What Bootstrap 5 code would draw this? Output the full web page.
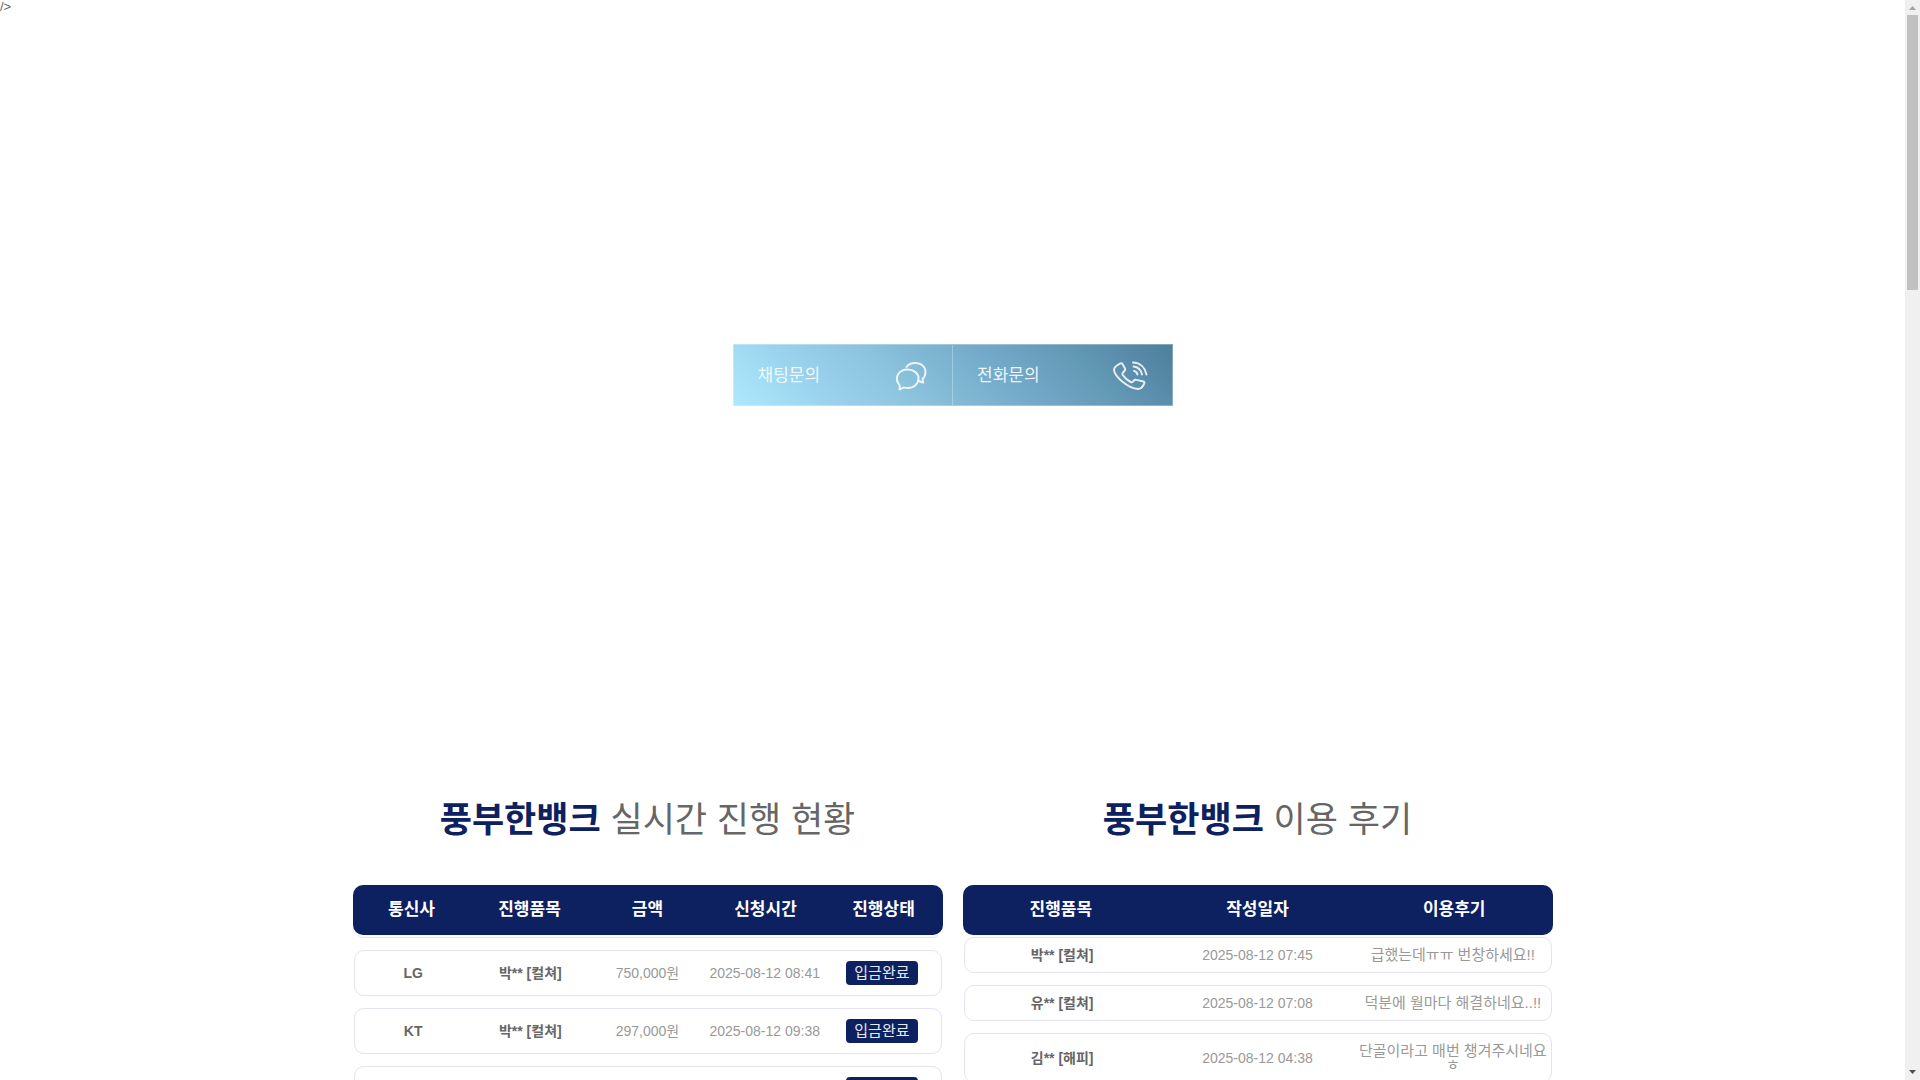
<!DOCTYPE html>
<html lang="ko">
<head>
<meta charset="utf-8">
<meta name="viewport" content="width=device-width, initial-scale=1">
<title>풍부한뱅크</title>
<link href="https://cdn.jsdelivr.net/npm/bootstrap@5.3.0/dist/css/bootstrap.min.css" rel="stylesheet">
<style>
  :root { --navy: #0d2060; --line: #e4e2f3; }
  body { font-family: "Liberation Sans", "Noto Sans CJK KR", sans-serif; font-size: 14px; line-height: 14px; color: #666; background: #fff; }
  .stray { font-size: 13px; height: 14px; }
  .hero { height: 720px; padding-top: 330px; }
  .contact { width: 440px; height: 62px; border: 1px solid rgba(255,255,255,.3);
    background: linear-gradient(45deg, #aee8fe 0%, #a1dcf3 12%, #99d0ec 22%, #8bc2dc 38%, #7bb3d0 52%, #70a5c5 65%, #6299b4 78%, #5a8cab 88%, #4c7f99 100%) border-box; }
  .contact a { color: rgba(255,255,255,.88); font-size: 17px; padding: 2px 24px 0; }
  .contact a + a { border-left: 1px solid rgba(255,255,255,.3); }
  .contact svg { width: 36px; height: 36px; fill: none; stroke: #fff; stroke-width: 2; stroke-linecap: round; stroke-linejoin: round; opacity: .85; }
  .boards { max-width: 1200px; gap: 20px; padding-top: 66px; }
  .board { flex: 1 1 0; min-width: 0; }
  .board h2 { font-size: 35px; line-height: 40px; font-weight: 400; margin-bottom: 45px; text-align: center; }
  .board h2 strong { color: var(--navy); }
  .board thead { background: var(--navy); border-radius: 10px; }
  .board th, .board td { flex: 1 1 0; min-width: 0; padding: 0; text-align: center; }
  .board thead th { color: #fff; font-size: 17px; line-height: 50px; font-weight: 700; }
  .board tbody { overflow: hidden; padding: 0 1px; }
  .board tbody tr { border: 1px solid var(--line); border-radius: 10px; margin-bottom: 12px; }
  .board tbody td { color: #999; }
  .progress-list tbody tr { height: 46px; }
  .progress-list tbody tr.passed { margin-top: -43px; }
  .state { display: inline-block; background: var(--navy); color: #e7e9f0; font-size: 15px; line-height: 24px; width: 72px; border-radius: 4px; }
  .review-list tbody { padding-top: 2px; }
  .review-list tbody tr { padding: 10px 0; }
  .review-list td:last-child { font-size: 15px; }
  .bar { flex: 0 0 15px; background: #f0f0f0; padding: 6px 2px; }
  .bar svg { width: 7px; height: 4px; margin: 0 auto 5px; display: block; }
  .bar svg.down { margin: auto auto 0; }
  .thumb { height: 275px; background: #c1c1c1; }
</style>
<script src="https://cdn.jsdelivr.net/npm/bootstrap@5.3.0/dist/js/bootstrap.bundle.min.js"></script>
</head>
<body>
<div class="d-flex vh-100 overflow-hidden">
  <main class="flex-grow-1 overflow-hidden">
    <div class="stray">/&gt;</div>
    <section class="hero">
      <nav class="contact d-flex mx-auto" aria-label="문의">
        <a href="#chat" class="d-flex flex-fill align-items-center justify-content-between text-decoration-none">채팅문의
          <svg viewBox="0 0 36 36" aria-hidden="true"><path d="M7.500 31.500C8 29.500 8 28 7 26.500 2 20 6.500 11.500 15.500 11.500c6.500 0 11 4 11 9S22 30 16 30c-1.500 0-3-.2-4-.6-1.500.8-3 1.800-4.500 2.100Z"/><path d="M14.500 9C16.500 6.300 19.500 5 23 5c6.500 0 10.500 4 10.500 9 0 3-1.300 5.500-3 7 0 1.500.3 2.500.8 3.500-1.600 0-3-.5-4-1.500"/></svg></a>
        <a href="#call" class="d-flex flex-fill align-items-center justify-content-between text-decoration-none">전화문의
          <svg viewBox="0 0 36 36" aria-hidden="true"><path d="M5 7.500 8 5.500c1-.6 2-.5 2.500.5L13 10.500c.5 1 .3 1.800-.5 2.500L11 14.500c-.8.8-.8 1.500-.3 2.500 2 3 5 5.500 8 7 1 .4 1.500.3 2.200-.4l1-1.100c.7-.8 1.500-1 2.500-.6l7 1.600c1 .4 1.200 1.200.8 2.200-1 2.300-3.200 5.300-6.200 5.300C16 30.500 2 18 2 11.500c0-2 1.500-3 3-4Z"/><path d="M22 13c2 .3 3 1.500 3.500 3.500M21.500 8.500C26 9 29 12 30 16.500M21 4.500c7 .3 12 5 13.500 12"/></svg></a>
      </nav>
    </section>
    <div class="boards d-flex mx-auto">
      <section class="board progress-list">
        <h2><strong>풍부한뱅크</strong> 실시간 진행 현황</h2>
        <table class="d-block">
          <thead class="d-block"><tr class="d-flex"><th scope="col">통신사</th><th scope="col">진행품목</th><th scope="col">금액</th><th scope="col">신청시간</th><th scope="col">진행상태</th></tr></thead>
          <tbody class="d-block">
            <tr class="d-flex passed"><td></td></tr>
            <tr class="d-flex align-items-center"><th scope="row">LG</th><th>박** [컬쳐]</th><td>750,000원</td><td>2025-08-12 08:41</td><td><span class="state">입금완료</span></td></tr>
            <tr class="d-flex align-items-center"><th scope="row">KT</th><th>박** [컬쳐]</th><td>297,000원</td><td>2025-08-12 09:38</td><td><span class="state">입금완료</span></td></tr>
            <tr class="d-flex align-items-center"><th></th><th></th><td></td><td></td><td><span class="state">입금완료</span></td></tr>
          </tbody>
        </table>
      </section>
      <section class="board review-list">
        <h2><strong>풍부한뱅크</strong> 이용 후기</h2>
        <table class="d-block">
          <thead class="d-block"><tr class="d-flex"><th scope="col">진행품목</th><th scope="col">작성일자</th><th scope="col">이용후기</th></tr></thead>
          <tbody class="d-block">
            <tr class="d-flex align-items-center"><th scope="row">박** [컬쳐]</th><td>2025-08-12 07:45</td><td>급했는데ㅠㅠ 번창하세요!!</td></tr>
            <tr class="d-flex align-items-center"><th scope="row">유** [컬쳐]</th><td>2025-08-12 07:08</td><td>덕분에 월마다 해결하네요..!!</td></tr>
            <tr class="d-flex align-items-center"><th scope="row">김** [해피]</th><td>2025-08-12 04:38</td><td>단골이라고 매번 챙겨주시네요ㅎ</td></tr>
          </tbody>
        </table>
      </section>
    </div>
  </main>
  <div class="bar d-flex flex-column" aria-hidden="true">
    <svg viewBox="0 0 7 4"><path d="M3.500 0 7 4H0Z" fill="#a3a3a3"/></svg>
    <div class="thumb"></div>
    <svg class="down" viewBox="0 0 7 4"><path d="M0 0h7L3.500 4Z" fill="#505050"/></svg>
  </div>
</div>
</body>
</html>
